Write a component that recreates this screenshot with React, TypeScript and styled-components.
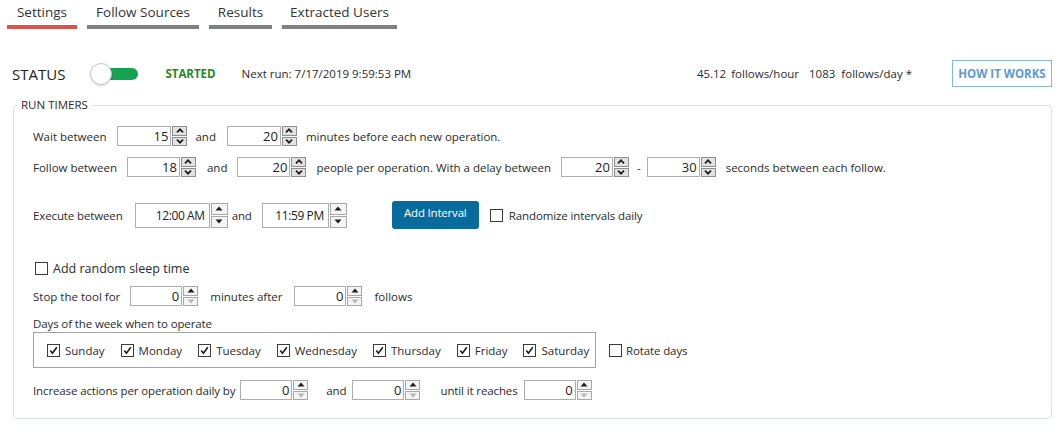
import React from 'react';
import styled, { createGlobalStyle } from 'styled-components';

const FONT = '"Open Sans", "Noto Sans", "Liberation Sans", sans-serif';

const GlobalStyle = createGlobalStyle`
  html, body { margin: 0; padding: 0; background: #ffffff; }
  body {
    font-family: ${FONT};
    color: #2b2b2b;
    width: 1064px;
    height: 432px;
    overflow: hidden;
  }
  * { box-sizing: border-box; }
`;

const Page = styled.div`
  display: flex;
  flex-direction: column;
  width: 1064px;
`;

/* ---------- Tabs ---------- */
const TabBar = styled.nav`
  display: flex;
  gap: 10px;
  padding-left: 7px;
`;

const Tab = styled.div<{ $active?: boolean; $w: number }>`
  width: ${(p) => p.$w}px;
  height: 29px;
  padding-top: 2px;
  border-bottom: 4px solid ${(p) => (p.$active ? '#d9534f' : '#808080')};
  text-align: center;
  font-size: 13.5px;
  line-height: 20px;
  color: #333;
`;

/* ---------- Status row ---------- */
const StatusRow = styled.div`
  display: flex;
  align-items: center;
  height: 27px;
  margin-top: 31px;
  padding: 0 12px;
  font-size: 11.5px;
`;

const StatusLabel = styled.span`
  font-size: 15px;
  color: #222;
`;

const Toggle = styled.div`
  position: relative;
  width: 48px;
  height: 22px;
  margin-left: 25px;
`;

const ToggleTrack = styled.div`
  position: absolute;
  left: 14px;
  top: 5px;
  width: 34px;
  height: 12px;
  border-radius: 6px;
  background: #16a253;
`;

const ToggleKnob = styled.div`
  position: absolute;
  left: 0;
  top: 0;
  width: 22px;
  height: 22px;
  border-radius: 50%;
  background: #ffffff;
  border: 1px solid #c4c4c4;
  box-shadow: 0 1px 2px rgba(0, 0, 0, 0.15);
`;

const Started = styled.span`
  margin-left: 27px;
  font-weight: 700;
  color: #1f8a1f;
`;

const Plain = styled.span<{ $ml?: number }>`
  margin-left: ${(p) => p.$ml ?? 0}px;
  white-space: nowrap;
`;

const Filler = styled.div`
  flex: 1;
`;

const HowButton = styled.button`
  width: 100px;
  height: 27px;
  margin-left: 40px;
  background: #ffffff;
  border: 1.5px solid #86b7df;
  color: #5b9bd3;
  font-family: ${FONT};
  font-weight: 700;
  font-size: 11.5px;
  padding: 0;
`;

/* ---------- Fieldset ---------- */
const Fieldset = styled.fieldset`
  margin: 11px 12px 0 13px;
  border: 1px solid #d8e0e8;
  border-radius: 4px;
  padding: 14px 0 18px 19px;
  min-width: 0;
`;

const Legend = styled.legend`
  font-size: 11.5px;
  line-height: 14px;
  padding: 0 4px;
  margin-left: -16px;
  color: #2b2b2b;
`;

const Row = styled.div<{ $mt?: number; $h: number }>`
  display: flex;
  align-items: center;
  height: ${(p) => p.$h}px;
  margin-top: ${(p) => p.$mt ?? 0}px;
  font-size: 11.5px;
  white-space: nowrap;
`;

const Text = styled.span<{ $ml?: number; $condensed?: boolean; $size?: number }>`
  margin-left: ${(p) => p.$ml ?? 0}px;
  letter-spacing: ${(p) => (p.$condensed ? '-0.12px' : '0')};
  ${(p) => (p.$size ? `font-size: ${p.$size}px;` : '')}
`;

/* ---------- Spinner ---------- */
const SpinWrap = styled.div<{ $ml?: number; $h: number }>`
  display: flex;
  height: ${(p) => p.$h}px;
  margin-left: ${(p) => p.$ml ?? 0}px;
`;

const SpinBox = styled.div<{ $w: number; $time?: boolean }>`
  width: ${(p) => p.$w}px;
  height: 100%;
  border: 1px solid #abadb3;
  background: #ffffff;
  display: flex;
  align-items: center;
  justify-content: flex-end;
  padding-right: ${(p) => (p.$time ? 4 : 2)}px;
  font-size: ${(p) => (p.$time ? 12 : 13)}px;
  letter-spacing: ${(p) => (p.$time ? '-0.4px' : '0')};
  color: #222;
`;

const SpinButtons = styled.div<{ $w: number }>`
  width: ${(p) => p.$w}px;
  display: flex;
  flex-direction: column;
  justify-content: space-between;
  padding: 0 0 0 1px;
`;

const SpinBtn = styled.div<{ $variant: 'chev' | 'tri' }>`
  flex: 1;
  display: flex;
  align-items: center;
  justify-content: center;
  border: 1px solid ${(p) => (p.$variant === 'chev' ? '#8e8e8e' : '#a8a8a8')};
  background: ${(p) => (p.$variant === 'chev' ? '#e2e2e2' : '#f4f4f4')};
  & + & {
    margin-top: 1px;
  }
`;

type SpinVariant = 'num' | 'time' | 'zero';

const Arrow: React.FC<{ up: boolean; kind: 'chev' | 'tri'; color: string }> = ({ up, kind, color }) => (
  <svg width="8" height="5" viewBox="0 0 8 5" style={{ transform: up ? undefined : 'rotate(180deg)' }}>
    {kind === 'chev' ? (
      <path d="M1 4.3 L4 1.3 L7 4.3" fill="none" stroke={color} strokeWidth="1.7" />
    ) : (
      <polygon points="0.5,4.5 4,0.5 7.5,4.5" fill={color} />
    )}
  </svg>
);

const Spinner: React.FC<{ value: string; box: number; ml?: number; variant?: SpinVariant }> = ({
  value,
  box,
  ml,
  variant = 'num',
}) => {
  const time = variant === 'time';
  const kind = variant === 'num' ? 'chev' : 'tri';
  return (
    <SpinWrap $ml={ml} $h={time ? 25 : 20}>
      <SpinBox $w={box} $time={time}>
        {value}
      </SpinBox>
      <SpinButtons $w={time ? 18 : 16}>
        <SpinBtn $variant={kind}>
          <Arrow up kind={kind} color="#1e1e1e" />
        </SpinBtn>
        <SpinBtn $variant={kind}>
          <Arrow up={false} kind={kind} color={variant === 'zero' ? '#b8b8b8' : '#1e1e1e'} />
        </SpinBtn>
      </SpinButtons>
    </SpinWrap>
  );
};

/* ---------- Checkbox ---------- */
const Box = styled.span<{ $ml?: number }>`
  display: inline-flex;
  align-items: center;
  justify-content: center;
  width: 13px;
  height: 13px;
  flex: none;
  border: 1px solid #3c3c3c;
  background: #ffffff;
  margin-left: ${(p) => p.$ml ?? 0}px;
`;

const Check: React.FC<{ checked?: boolean; ml?: number }> = ({ checked, ml }) => (
  <Box $ml={ml}>
    {checked && (
      <svg width="9" height="9" viewBox="0 0 9 9">
        <path d="M1.3 4.6 L3.4 7.2 L7.8 1.2" fill="none" stroke="#1a1a1a" strokeWidth="1.6" />
      </svg>
    )}
  </Box>
);

const AddButton = styled.button`
  margin-left: 45px;
  width: 87px;
  height: 28px;
  border: none;
  border-radius: 3px;
  background: #086b9b;
  color: #ffffff;
  font-family: ${FONT};
  font-size: 11.5px;
  letter-spacing: -0.2px;
  padding: 0 0 6px;
`;

const DaysBox = styled.div`
  display: flex;
  align-items: center;
  width: 563px;
  height: 36px;
  border: 1px solid #a3a3a3;
  padding-left: 13px;
  gap: 16px;
`;

const Day = styled.label`
  display: flex;
  align-items: center;
  gap: 5px;
`;

const days = ['Sunday', 'Monday', 'Tuesday', 'Wednesday', 'Thursday', 'Friday', 'Saturday'];

export default function App() {
  return (
    <Page>
      <GlobalStyle />
      <TabBar>
        <Tab $active $w={70}>Settings</Tab>
        <Tab $w={112}>Follow Sources</Tab>
        <Tab $w={63}>Results</Tab>
        <Tab $w={115}>Extracted Users</Tab>
      </TabBar>

      <StatusRow>
        <StatusLabel>STATUS</StatusLabel>
        <Toggle>
          <ToggleTrack />
          <ToggleKnob />
        </Toggle>
        <Started>STARTED</Started>
        <Plain $ml={26}>Next run: 7/17/2019 9:59:53 PM</Plain>
        <Filler />
        <Plain>45.12</Plain>
        <Plain $ml={5}>follows/hour</Plain>
        <Plain $ml={10}>1083</Plain>
        <Plain $ml={6}>follows/day *</Plain>
        <HowButton>HOW IT WORKS</HowButton>
      </StatusRow>

      <Fieldset>
        <Legend>RUN TIMERS</Legend>

        <Row $h={20}>
          <Text>Wait between</Text>
          <Spinner value="15" box={54} ml={11} />
          <Text $ml={8}>and</Text>
          <Spinner value="20" box={54} ml={11} />
          <Text $ml={9}>minutes before each new operation.</Text>
        </Row>

        <Row $h={20} $mt={11}>
          <Text>Follow between</Text>
          <Spinner value="18" box={53} ml={10} />
          <Text $ml={11}>and</Text>
          <Spinner value="20" box={53} ml={10} />
          <Text $ml={10}>people per operation. With a delay between</Text>
          <Spinner value="20" box={52} ml={10} />
          <Text $ml={8}>-</Text>
          <Spinner value="30" box={53} ml={6} />
          <Text $ml={10}>seconds between each follow.</Text>
        </Row>

        <Row $h={28} $mt={24}>
          <Text $condensed>Execute between</Text>
          <Spinner value="12:00 AM" box={75} ml={12} variant="time" />
          <Text $ml={4} $condensed>and</Text>
          <Spinner value="11:59 PM" box={67} ml={10} variant="time" />
          <AddButton>Add Interval</AddButton>
          <Check ml={11} />
          <Text $ml={6} $condensed>Randomize intervals daily</Text>
        </Row>

        <Row $h={18} $mt={30}>
          <Check ml={2} />
          <Text $ml={5} $size={12.5}>Add random sleep time</Text>
        </Row>

        <Row $h={20} $mt={9}>
          <Text>Stop the tool for</Text>
          <Spinner value="0" box={52} ml={10} variant="zero" />
          <Text $ml={12}>minutes after</Text>
          <Spinner value="0" box={52} ml={12} variant="zero" />
          <Text $ml={12}>follows</Text>
        </Row>

        <Row $h={14} $mt={10}>
          <Text $condensed>Days of the week when to operate</Text>
        </Row>

        <Row $h={36} $mt={2}>
          <DaysBox>
            {days.map((d) => (
              <Day key={d}>
                <Check checked />
                {d}
              </Day>
            ))}
          </DaysBox>
          <Check ml={13} />
          <Text $ml={4} $condensed>Rotate days</Text>
        </Row>

        <Row $h={20} $mt={12}>
          <Text $condensed>Increase actions per operation daily by</Text>
          <Spinner value="0" box={52} ml={5} variant="zero" />
          <Text $ml={18} $condensed>and</Text>
          <Spinner value="0" box={52} ml={6} variant="zero" />
          <Text $ml={20} $condensed>until it reaches</Text>
          <Spinner value="0" box={52} ml={6} variant="zero" />
        </Row>
      </Fieldset>
    </Page>
  );
}
